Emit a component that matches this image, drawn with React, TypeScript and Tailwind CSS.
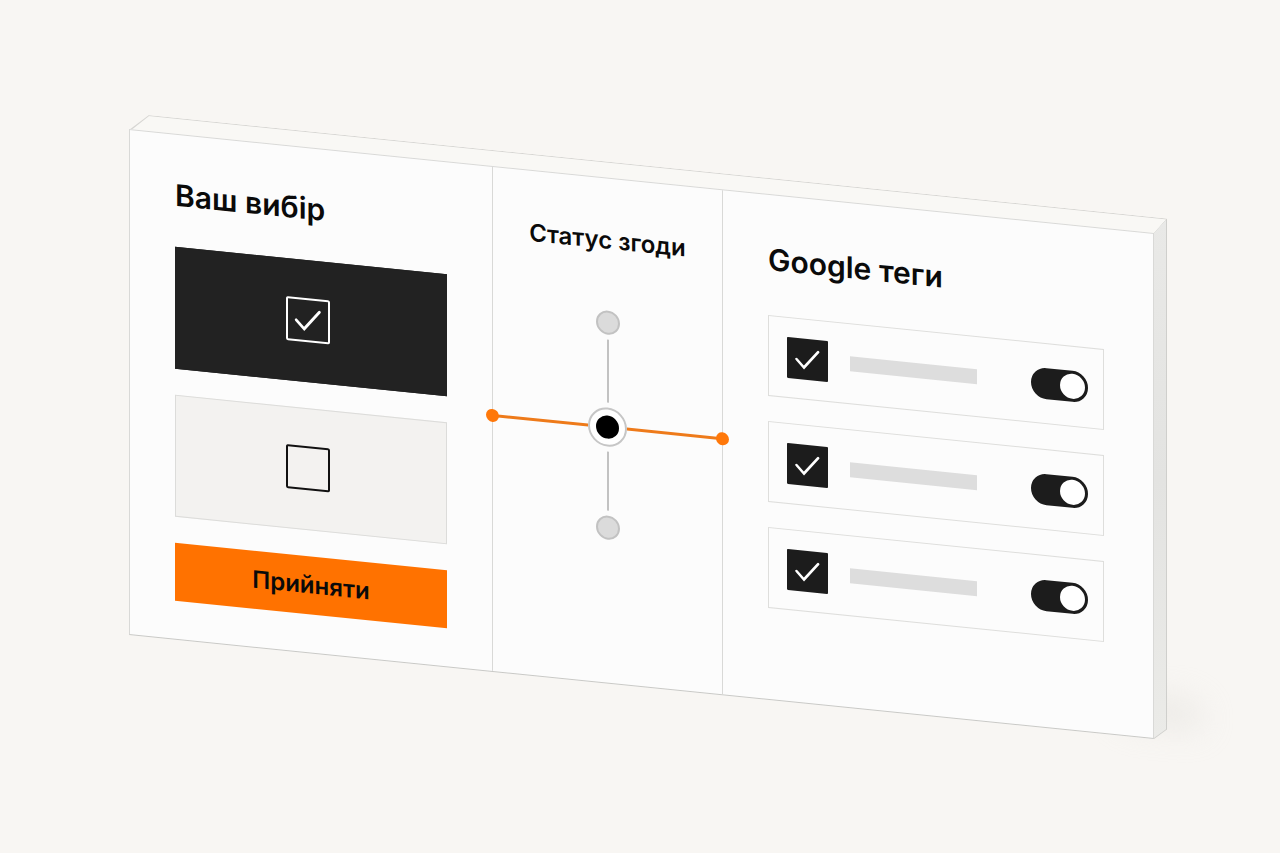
import { useState } from 'react'

const TAGS = ['analytics', 'ads', 'remarketing']

function CheckMark({ className }: { className: string }) {
  return (
    <svg viewBox="0 0 44 44" className={`pointer-events-none col-start-1 row-start-1 ${className}`} fill="none" aria-hidden="true">
      <path d="M10.2 22.8 18.2 31 33.4 13" stroke="#fff" strokeWidth="2.8" strokeLinecap="round" strokeLinejoin="miter" />
    </svg>
  )
}

function ChoiceCard({ label, dark, initial }: { label: string; dark?: boolean; initial: boolean }) {
  const [checked, setChecked] = useState(initial)

  return (
    <label
      className={`flex h-[122px] items-center justify-center border pr-1.5 pb-0.5 ${
        dark ? 'border-[#222222] bg-[#222222]' : 'border-[#dcdcda] bg-[#f3f2f0]'
      }`}
    >
      <span className="grid">
        <input
          type="checkbox"
          aria-label={label}
          checked={checked}
          onChange={(e) => setChecked(e.target.checked)}
          className={`col-start-1 row-start-1 size-11 appearance-none rounded-xs border-2 ${dark ? 'border-white' : 'border-[#111111]'}`}
        />
        {checked && <CheckMark className="size-11" />}
      </span>
    </label>
  )
}

function TagRow({ name }: { name: string }) {
  const [checked, setChecked] = useState(true)
  const [enabled, setEnabled] = useState(true)

  return (
    <li className="flex h-[81px] items-center border border-[#dededc] pr-[15px] pl-[18px]">
      <span className="grid shrink-0">
        <input
          type="checkbox"
          aria-label={name}
          checked={checked}
          onChange={(e) => setChecked(e.target.checked)}
          className="col-start-1 row-start-1 size-[41px] appearance-none rounded-[1px] bg-[#1c1c1c]"
        />
        {checked && <CheckMark className="size-[41px]" />}
      </span>
      <span className="ml-[22px] h-[15px] w-[127px] bg-[#dddddd]" />
      <input
        type="checkbox"
        role="switch"
        aria-label={`${name} on`}
        checked={enabled}
        onChange={(e) => setEnabled(e.target.checked)}
        className="ml-auto flex h-[31px] w-[57px] shrink-0 appearance-none items-center rounded-full bg-[#1c1c1c] p-[3px] before:size-[25px] before:rounded-full before:bg-white checked:justify-end"
      />
    </li>
  )
}

function StatusTrack() {
  return (
    <div className="mt-[50px] flex flex-col items-center gap-[5px]">
      <span className="size-6 rounded-full border-2 border-[#c2c2c2] bg-[#dbdbdb]" />
      <span className="h-[63px] w-0.5 bg-[#c2c2c2]" />
      <div className="relative flex w-full items-center">
        <span className="h-[3px] flex-1 bg-[#ee7a1a]" />
        <span className="flex size-[39px] items-center justify-center rounded-full border-2 border-[#c6c6c6] bg-white">
          <span className="size-[23px] rounded-full bg-black" />
        </span>
        <span className="h-[3px] flex-1 bg-[#ee7a1a]" />
        <span className="absolute -left-[7px] size-[13px] rounded-full bg-[#ff780a]" />
        <span className="absolute -right-[7px] size-[13px] rounded-full bg-[#ff780a]" />
      </div>
      <span className="h-[59px] w-0.5 bg-[#c2c2c2]" />
      <span className="size-6 rounded-full border-2 border-[#c2c2c2] bg-[#dbdbdb]" />
    </div>
  )
}

export default function App() {
  return (
    <main className="min-h-screen overflow-hidden bg-[#f8f6f3] pt-[129px] pr-[126px] pb-20 pl-[129px] font-['Inter','Liberation_Sans',sans-serif] text-[#0a0a0a]">
      <div className="relative origin-top-left skew-y-[5.8deg]">
        {/* Soft shadow on the floor */}
        <div className="absolute -right-[50px] bottom-3 h-8 w-[90px] rounded-full bg-[#dcdad5] opacity-40 blur-lg" />

        {/* Top face */}
        <div className="absolute -top-4 -right-[13px] left-0 h-[17px] bg-[#d6d5d2] [clip-path:polygon(20px_0,100%_0,calc(100%-13px)_100%,0_100%)]">
          <div className="h-full border-t border-[#d6d5d2] bg-[#f9f8f5] [clip-path:polygon(21px_0,100%_0,calc(100%-13px)_100%,2px_100%)]" />
        </div>

        {/* Right face */}
        <div className="absolute -top-4 bottom-0 left-full w-[13px] bg-[#cfcfcc] [clip-path:polygon(0_16px,100%_0,100%_calc(100%-11px),0_100%)]">
          <div className="h-full border-r border-[#cfcfcc] bg-linear-to-b from-[#e9e9e7] via-[#e3e3e1] to-[#ebebe8] [clip-path:polygon(0_16px,100%_0,100%_calc(100%-12px),0_calc(100%-1px))]" />
        </div>

        <div className="relative grid grid-cols-[362fr_231fr_430fr] border border-[#d9d9d7] border-b-[#c9c9c6] bg-[#fcfcfc]">
          <section className="px-[45px] pt-10 pb-[38px]">
            <h2 className="text-[30px] leading-10 font-semibold whitespace-nowrap">Ваш вибір</h2>
            <div className="mt-8 flex flex-col gap-[26px]">
              <ChoiceCard label="Дозволити" dark initial />
              <ChoiceCard label="Відхилити" initial={false} />
              <button type="button" className="h-[58px] bg-[#ff7200] text-[24px] font-semibold">
                Прийняти
              </button>
            </div>
          </section>

          <section className="border-x border-[#d9d9d7] pt-[42px]">
            <h2 className="text-center text-[24px] leading-10 font-semibold whitespace-nowrap">Статус згоди</h2>
            <StatusTrack />
          </section>

          <section className="pt-11 pr-[49px] pl-[45px]">
            <h2 className="text-[30px] leading-10 font-semibold whitespace-nowrap">Google теги</h2>
            <ul className="mt-9 flex flex-col gap-[25px]">
              {TAGS.map((tag) => (
                <TagRow key={tag} name={tag} />
              ))}
            </ul>
          </section>
        </div>
      </div>
    </main>
  )
}
